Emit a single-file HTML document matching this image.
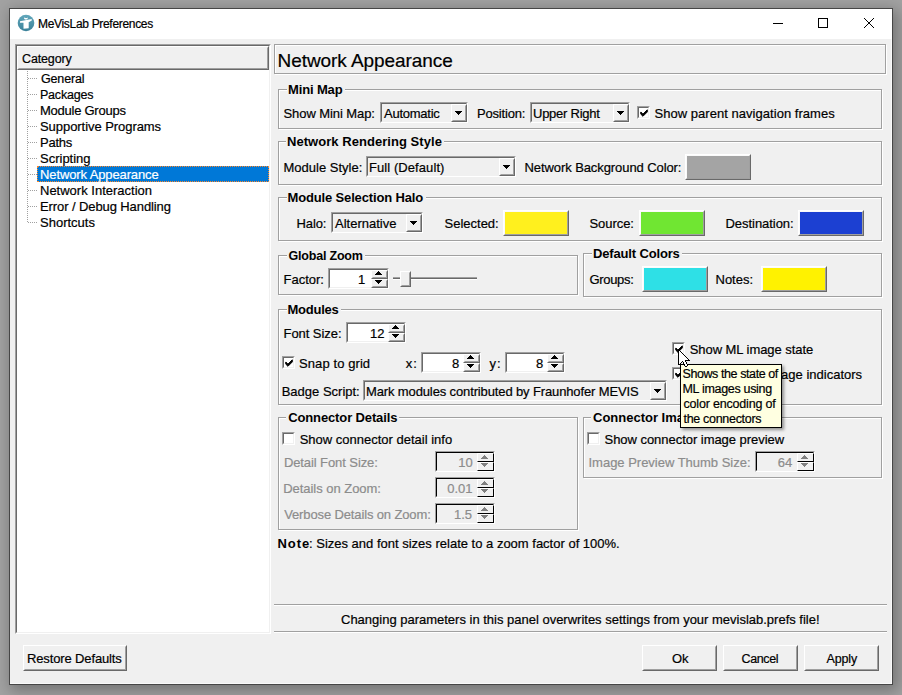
<!DOCTYPE html><html><head><meta charset="utf-8"><title>MeVisLab Preferences</title><style>
html,body{margin:0;padding:0;width:902px;height:695px;overflow:hidden;background:#a2a2a2}
.a{position:absolute;box-sizing:content-box}
.t{position:absolute;font-family:"Liberation Sans",sans-serif;font-size:13px;line-height:15px;color:#000;white-space:nowrap;-webkit-text-stroke:0.2px currentColor}
</style></head><body>
<div class="a" style="left:9px;top:8px;width:884px;height:677px;background:#464646;box-shadow:3px 4px 14px 2px rgba(0,0,0,0.28)"></div>
<div class="a" style="left:10px;top:9px;width:882px;height:675px;background:#f0f0f0;"></div>
<div class="a" style="left:891px;top:39px;width:1px;height:645px;background:#fafafa;"></div>
<div class="a" style="left:10px;top:683px;width:882px;height:1px;background:#fafafa;"></div>
<div class="a" style="left:10px;top:9px;width:882px;height:30px;background:#fff;"></div>
<svg class="a" style="left:17px;top:14px" width="18" height="18" viewBox="0 0 18 18"><defs><linearGradient id="ig" x1="0" y1="0" x2="0" y2="1"><stop offset="0" stop-color="#62a7bb"/><stop offset="1" stop-color="#3a8199"/></linearGradient></defs><circle cx="9" cy="9" r="8.3" fill="url(#ig)"/><path d="M3 7.3 L14.7 5.1 L14.8 6.4 L11.7 8.3 L11.7 14.3 L6.5 14.7 L6.5 8.7 L3 8.7 Z" fill="#fff"/><path d="M6.9 3.5 Q8.9 4.4 11 3.4 L10.5 4.9 Q8.9 6.2 7.3 4.9 Z" fill="#fff"/></svg>
<div class="t" style="left:38px;top:17px;line-height:14px;font-size:12px;letter-spacing:-0.316px;">MeVisLab Preferences</div>
<div class="a" style="left:773px;top:23px;width:10px;height:1px;background:#000;"></div>
<div class="a" style="left:818px;top:18px;width:8px;height:8px;border:1px solid #000"></div>
<svg class="a" style="left:864px;top:18px" width="10" height="10" shape-rendering="crispEdges"><path d="M0 0h1v1h-1zM1 1h1v1h-1zM2 2h1v1h-1zM3 3h1v1h-1zM4 4h2v2h-2zM6 6h1v1h-1zM7 7h1v1h-1zM8 8h1v1h-1zM9 9h1v1h-1zM9 0h1v1h-1zM8 1h1v1h-1zM7 2h1v1h-1zM6 3h1v1h-1zM3 6h1v1h-1zM2 7h1v1h-1zM1 8h1v1h-1zM0 9h1v1h-1z" fill="#000"/></svg>
<div class="a" style="left:15px;top:44px;width:254px;height:588px;border:1px solid;border-color:#a0a0a0 #fff #fff #a0a0a0;background:#fff"><div style="position:absolute;left:0;top:0;width:252px;height:586px;border:1px solid;border-color:#696969 #f0f0f0 #f0f0f0 #696969"></div></div>
<div class="a" style="left:17px;top:46px;width:250px;height:22px;border:1px solid;border-color:#fff #696969 #696969 #fff;background:#f0f0f0"><div style="position:absolute;left:0;top:0;width:248px;height:20px;border:1px solid;border-color:#f0f0f0 #a0a0a0 #a0a0a0 #f0f0f0"></div></div>
<div class="t" style="left:22px;top:52px;line-height:14px;font-size:12.5px;letter-spacing:-0.143px;">Category</div>
<div class="a" style="left:27px;top:71px;width:1px;height:152px;background:repeating-linear-gradient(to bottom,#a0a0a0 0 1px,transparent 1px 2px)"></div>
<div class="a" style="left:28px;top:78px;width:9px;height:1px;background:repeating-linear-gradient(to right,#a0a0a0 0 1px,transparent 1px 2px)"></div>
<div class="t" style="left:41px;top:72px;line-height:14px;font-size:12.5px;letter-spacing:-0.167px;">General</div>
<div class="a" style="left:28px;top:94px;width:9px;height:1px;background:repeating-linear-gradient(to right,#a0a0a0 0 1px,transparent 1px 2px)"></div>
<div class="t" style="left:40px;top:88px;line-height:14px;font-size:12.5px;letter-spacing:-0.214px;">Packages</div>
<div class="a" style="left:28px;top:110px;width:9px;height:1px;background:repeating-linear-gradient(to right,#a0a0a0 0 1px,transparent 1px 2px)"></div>
<div class="t" style="left:40px;top:103px;line-height:15px;letter-spacing:-0.25px;">Module Groups</div>
<div class="a" style="left:28px;top:126px;width:9px;height:1px;background:repeating-linear-gradient(to right,#a0a0a0 0 1px,transparent 1px 2px)"></div>
<div class="t" style="left:40px;top:119px;line-height:15px;letter-spacing:-0.056px;">Supportive Programs</div>
<div class="a" style="left:28px;top:142px;width:9px;height:1px;background:repeating-linear-gradient(to right,#a0a0a0 0 1px,transparent 1px 2px)"></div>
<div class="t" style="left:40px;top:135px;line-height:15px;letter-spacing:-0.25px;">Paths</div>
<div class="a" style="left:28px;top:158px;width:9px;height:1px;background:repeating-linear-gradient(to right,#a0a0a0 0 1px,transparent 1px 2px)"></div>
<div class="t" style="left:40px;top:151px;line-height:15px;">Scripting</div>
<div class="a" style="left:28px;top:174px;width:9px;height:1px;background:repeating-linear-gradient(to right,#a0a0a0 0 1px,transparent 1px 2px)"></div>
<div class="a" style="left:37px;top:166px;width:232px;height:16px;background:#0078d7;"></div>
<div class="a" style="left:37px;top:166px;width:230px;height:14px;border:1px dotted #ff8728"></div>
<div class="t" style="left:40px;top:167px;line-height:15px;color:#fff;letter-spacing:-0.118px;">Network Appearance</div>
<div class="a" style="left:28px;top:190px;width:9px;height:1px;background:repeating-linear-gradient(to right,#a0a0a0 0 1px,transparent 1px 2px)"></div>
<div class="t" style="left:40px;top:183px;line-height:15px;">Network Interaction</div>
<div class="a" style="left:28px;top:206px;width:9px;height:1px;background:repeating-linear-gradient(to right,#a0a0a0 0 1px,transparent 1px 2px)"></div>
<div class="t" style="left:40px;top:199px;line-height:15px;letter-spacing:-0.095px;">Error / Debug Handling</div>
<div class="a" style="left:28px;top:222px;width:9px;height:1px;background:repeating-linear-gradient(to right,#a0a0a0 0 1px,transparent 1px 2px)"></div>
<div class="t" style="left:40px;top:215px;line-height:15px;">Shortcuts</div>
<div class="a" style="left:275px;top:45px;width:610px;height:28px;border:1px solid #fff"></div>
<div class="a" style="left:274px;top:44px;width:610px;height:28px;border:1px solid #a0a0a0"></div>
<div class="t" style="left:277.5px;top:50px;line-height:21px;font-size:19px;letter-spacing:-0.059px;">Network Appearance</div>
<div class="a" style="left:279px;top:90px;width:602px;height:38px;border:1px solid #fff"></div>
<div class="a" style="left:278px;top:89px;width:602px;height:38px;border:1px solid #a0a0a0"></div>
<div class="a" style="left:287px;top:89px;width:58px;height:2px;background:#f0f0f0;"></div>
<div class="t" style="left:288px;top:82px;line-height:15px;font-weight:bold;-webkit-text-stroke:0;letter-spacing:-0.143px;">Mini Map</div>
<div class="t" style="left:283.5px;top:106px;line-height:15px;letter-spacing:-0.077px;">Show Mini Map:</div>
<div class="a" style="left:380px;top:102px;width:86px;height:19px;border:1px solid;border-color:#a0a0a0 #fff #fff #a0a0a0;background:#f0f0f0"><div style="position:absolute;left:0;top:0;width:84px;height:17px;border:1px solid;border-color:#696969 #f0f0f0 #f0f0f0 #696969"></div></div>
<div class="a" style="left:451px;top:104px;width:14px;height:16px;border:1px solid;border-color:#fff #696969 #696969 #fff;background:#f0f0f0"><div style="position:absolute;left:0;top:0;width:12px;height:14px;border:1px solid;border-color:#f0f0f0 #a0a0a0 #a0a0a0 #f0f0f0"></div></div>
<svg class="a" style="left:455px;top:111px" width="7" height="4" shape-rendering="crispEdges"><path d="M0 0h7v1h-7zM1 1h5v1h-5zM2 2h3v1h-3zM3 3h1v1h-1z" fill="#000"/></svg>
<div class="t" style="left:384px;top:106px;line-height:15px;letter-spacing:-0.25px;">Automatic</div>
<div class="t" style="left:477px;top:106px;line-height:15px;letter-spacing:-0.188px;">Position:</div>
<div class="a" style="left:530px;top:102px;width:98px;height:19px;border:1px solid;border-color:#a0a0a0 #fff #fff #a0a0a0;background:#f0f0f0"><div style="position:absolute;left:0;top:0;width:96px;height:17px;border:1px solid;border-color:#696969 #f0f0f0 #f0f0f0 #696969"></div></div>
<div class="a" style="left:613px;top:104px;width:14px;height:16px;border:1px solid;border-color:#fff #696969 #696969 #fff;background:#f0f0f0"><div style="position:absolute;left:0;top:0;width:12px;height:14px;border:1px solid;border-color:#f0f0f0 #a0a0a0 #a0a0a0 #f0f0f0"></div></div>
<svg class="a" style="left:617px;top:111px" width="7" height="4" shape-rendering="crispEdges"><path d="M0 0h7v1h-7zM1 1h5v1h-5zM2 2h3v1h-3zM3 3h1v1h-1z" fill="#000"/></svg>
<div class="t" style="left:533px;top:106px;line-height:15px;letter-spacing:-0.25px;">Upper Right</div>
<div class="a" style="left:637px;top:106px;width:11px;height:11px;border:1px solid;border-color:#a0a0a0 #fff #fff #a0a0a0;background:#fff"><div style="position:absolute;left:0;top:0;width:9px;height:9px;border:1px solid;border-color:#696969 #f0f0f0 #f0f0f0 #696969"></div></div>
<svg class="a" style="left:637px;top:106px" width="13" height="13"><polygon points="3.79,5.96 3.79,8.13 5.96,10.29 10.29,5.96 10.29,3.79 5.96,8.13" fill="#000" stroke="#000" stroke-width="1"/></svg>
<div class="t" style="left:654.5px;top:106px;line-height:15px;letter-spacing:0.036px;">Show parent navigation frames</div>
<div class="a" style="left:279px;top:142px;width:602px;height:42px;border:1px solid #fff"></div>
<div class="a" style="left:278px;top:141px;width:602px;height:42px;border:1px solid #a0a0a0"></div>
<div class="a" style="left:286px;top:141px;width:158px;height:2px;background:#f0f0f0;"></div>
<div class="t" style="left:287px;top:134px;line-height:15px;font-weight:bold;-webkit-text-stroke:0;letter-spacing:0.045px;">Network Rendering Style</div>
<div class="t" style="left:283.5px;top:160px;line-height:15px;">Module Style:</div>
<div class="a" style="left:366px;top:156px;width:148px;height:19px;border:1px solid;border-color:#a0a0a0 #fff #fff #a0a0a0;background:#f0f0f0"><div style="position:absolute;left:0;top:0;width:146px;height:17px;border:1px solid;border-color:#696969 #f0f0f0 #f0f0f0 #696969"></div></div>
<div class="a" style="left:499px;top:158px;width:14px;height:16px;border:1px solid;border-color:#fff #696969 #696969 #fff;background:#f0f0f0"><div style="position:absolute;left:0;top:0;width:12px;height:14px;border:1px solid;border-color:#f0f0f0 #a0a0a0 #a0a0a0 #f0f0f0"></div></div>
<svg class="a" style="left:503px;top:165px" width="7" height="4" shape-rendering="crispEdges"><path d="M0 0h7v1h-7zM1 1h5v1h-5zM2 2h3v1h-3zM3 3h1v1h-1z" fill="#000"/></svg>
<div class="t" style="left:369px;top:160px;line-height:15px;letter-spacing:0.077px;">Full (Default)</div>
<div class="t" style="left:524.5px;top:160px;line-height:15px;letter-spacing:-0.083px;">Network Background Color:</div>
<div class="a" style="left:685px;top:154px;width:64px;height:24px;border:1px solid;border-color:#fff #696969 #696969 #fff;background:#a4a4a4"><div style="position:absolute;left:0;top:0;width:62px;height:22px;border:1px solid;border-color:#fafafa #a0a0a0 #a0a0a0 #fafafa"></div></div>
<div class="a" style="left:279px;top:198px;width:602px;height:42px;border:1px solid #fff"></div>
<div class="a" style="left:278px;top:197px;width:602px;height:42px;border:1px solid #a0a0a0"></div>
<div class="a" style="left:286.5px;top:197px;width:139px;height:2px;background:#f0f0f0;"></div>
<div class="t" style="left:287.5px;top:190px;line-height:15px;font-weight:bold;-webkit-text-stroke:0;letter-spacing:-0.15px;">Module Selection Halo</div>
<div class="t" style="left:296.5px;top:216px;line-height:15px;letter-spacing:-0.1px;">Halo:</div>
<div class="a" style="left:331px;top:212px;width:90px;height:19px;border:1px solid;border-color:#a0a0a0 #fff #fff #a0a0a0;background:#f0f0f0"><div style="position:absolute;left:0;top:0;width:88px;height:17px;border:1px solid;border-color:#696969 #f0f0f0 #f0f0f0 #696969"></div></div>
<div class="a" style="left:406px;top:214px;width:14px;height:16px;border:1px solid;border-color:#fff #696969 #696969 #fff;background:#f0f0f0"><div style="position:absolute;left:0;top:0;width:12px;height:14px;border:1px solid;border-color:#f0f0f0 #a0a0a0 #a0a0a0 #f0f0f0"></div></div>
<svg class="a" style="left:410px;top:221px" width="7" height="4" shape-rendering="crispEdges"><path d="M0 0h7v1h-7zM1 1h5v1h-5zM2 2h3v1h-3zM3 3h1v1h-1z" fill="#000"/></svg>
<div class="t" style="left:335px;top:216px;line-height:15px;">Alternative</div>
<div class="t" style="left:444.5px;top:216px;line-height:15px;">Selected:</div>
<div class="a" style="left:503px;top:210px;width:64px;height:24px;border:1px solid;border-color:#fff #696969 #696969 #fff;background:#fff01e"><div style="position:absolute;left:0;top:0;width:62px;height:22px;border:1px solid;border-color:#fafafa #a0a0a0 #a0a0a0 #fafafa"></div></div>
<div class="t" style="left:589.5px;top:216px;line-height:15px;letter-spacing:-0.067px;">Source:</div>
<div class="a" style="left:639px;top:210px;width:64px;height:24px;border:1px solid;border-color:#fff #696969 #696969 #fff;background:#70e632"><div style="position:absolute;left:0;top:0;width:62px;height:22px;border:1px solid;border-color:#fafafa #a0a0a0 #a0a0a0 #fafafa"></div></div>
<div class="t" style="left:725.5px;top:216px;line-height:15px;letter-spacing:-0.045px;">Destination:</div>
<div class="a" style="left:798px;top:210px;width:64px;height:24px;border:1px solid;border-color:#fff #696969 #696969 #fff;background:#1c40d2"><div style="position:absolute;left:0;top:0;width:62px;height:22px;border:1px solid;border-color:#fafafa #a0a0a0 #a0a0a0 #fafafa"></div></div>
<div class="a" style="left:279px;top:256px;width:298px;height:38px;border:1px solid #fff"></div>
<div class="a" style="left:278px;top:255px;width:298px;height:38px;border:1px solid #a0a0a0"></div>
<div class="a" style="left:286.5px;top:255px;width:78px;height:2px;background:#f0f0f0;"></div>
<div class="t" style="left:288.5px;top:249px;line-height:14px;font-size:12.5px;font-weight:bold;-webkit-text-stroke:0;letter-spacing:-0.2px;">Global Zoom</div>
<div class="t" style="left:283.5px;top:272px;line-height:15px;">Factor:</div>
<div class="a" style="left:328px;top:268px;width:59px;height:19px;border:1px solid;border-color:#a0a0a0 #fff #fff #a0a0a0;background:#fff"><div style="position:absolute;left:0;top:0;width:57px;height:17px;border:1px solid;border-color:#696969 #f0f0f0 #f0f0f0 #696969"></div></div>
<div class="a" style="left:371px;top:270px;width:15px;height:7px;border:1px solid;border-color:#fff #696969 #696969 #fff;background:#f0f0f0"><div style="position:absolute;left:0;top:0;width:13px;height:5px;border:1px solid;border-color:#f0f0f0 #a0a0a0 #a0a0a0 #f0f0f0"></div></div>
<div class="a" style="left:371px;top:279px;width:15px;height:7px;border:1px solid;border-color:#fff #696969 #696969 #fff;background:#f0f0f0"><div style="position:absolute;left:0;top:0;width:13px;height:5px;border:1px solid;border-color:#f0f0f0 #a0a0a0 #a0a0a0 #f0f0f0"></div></div>
<svg class="a" style="left:375px;top:271px" width="7" height="4" shape-rendering="crispEdges"><path d="M3 0h1v1h-1zM2 1h3v1h-3zM1 2h5v1h-5zM0 3h7v1h-7z" fill="#000"/></svg>
<svg class="a" style="left:375px;top:280px" width="7" height="4" shape-rendering="crispEdges"><path d="M0 0h7v1h-7zM1 1h5v1h-5zM2 2h3v1h-3zM3 3h1v1h-1z" fill="#000"/></svg>
<div class="t" style="left:358px;top:272px;line-height:15px;">1</div>
<div class="a" style="left:393px;top:277px;width:84px;height:1px;background:#a0a0a0;"></div>
<div class="a" style="left:393px;top:278px;width:84px;height:1px;background:#696969;"></div>
<div class="a" style="left:393px;top:279px;width:84px;height:1px;background:#fff;"></div>
<div class="a" style="left:400px;top:271px;width:9px;height:14px;border:1px solid;border-color:#fff #696969 #696969 #fff;background:#f0f0f0"><div style="position:absolute;left:0;top:0;width:7px;height:12px;border:1px solid;border-color:#f0f0f0 #a0a0a0 #a0a0a0 #f0f0f0"></div></div>
<div class="a" style="left:584px;top:254px;width:297px;height:42px;border:1px solid #fff"></div>
<div class="a" style="left:583px;top:253px;width:297px;height:42px;border:1px solid #a0a0a0"></div>
<div class="a" style="left:592px;top:253px;width:90px;height:2px;background:#f0f0f0;"></div>
<div class="t" style="left:593px;top:246px;line-height:15px;font-weight:bold;-webkit-text-stroke:0;letter-spacing:-0.154px;">Default Colors</div>
<div class="t" style="left:589.5px;top:272px;line-height:15px;letter-spacing:-0.333px;">Groups:</div>
<div class="a" style="left:642px;top:266px;width:64px;height:24px;border:1px solid;border-color:#fff #696969 #696969 #fff;background:#2ee0e6"><div style="position:absolute;left:0;top:0;width:62px;height:22px;border:1px solid;border-color:#fafafa #a0a0a0 #a0a0a0 #fafafa"></div></div>
<div class="t" style="left:715.5px;top:272px;line-height:15px;">Notes:</div>
<div class="a" style="left:761px;top:266px;width:64px;height:24px;border:1px solid;border-color:#fff #696969 #696969 #fff;background:#fff200"><div style="position:absolute;left:0;top:0;width:62px;height:22px;border:1px solid;border-color:#fafafa #a0a0a0 #a0a0a0 #fafafa"></div></div>
<div class="a" style="left:279px;top:310px;width:602px;height:94px;border:1px solid #fff"></div>
<div class="a" style="left:278px;top:309px;width:602px;height:94px;border:1px solid #a0a0a0"></div>
<div class="a" style="left:286.5px;top:309px;width:54.6px;height:2px;background:#f0f0f0;"></div>
<div class="t" style="left:287.5px;top:302px;line-height:15px;font-weight:bold;-webkit-text-stroke:0;letter-spacing:-0.233px;">Modules</div>
<div class="t" style="left:283.5px;top:326px;line-height:15px;letter-spacing:-0.056px;">Font Size:</div>
<div class="a" style="left:346px;top:322px;width:58px;height:19px;border:1px solid;border-color:#a0a0a0 #fff #fff #a0a0a0;background:#fff"><div style="position:absolute;left:0;top:0;width:56px;height:17px;border:1px solid;border-color:#696969 #f0f0f0 #f0f0f0 #696969"></div></div>
<div class="a" style="left:388px;top:324px;width:15px;height:7px;border:1px solid;border-color:#fff #696969 #696969 #fff;background:#f0f0f0"><div style="position:absolute;left:0;top:0;width:13px;height:5px;border:1px solid;border-color:#f0f0f0 #a0a0a0 #a0a0a0 #f0f0f0"></div></div>
<div class="a" style="left:388px;top:333px;width:15px;height:7px;border:1px solid;border-color:#fff #696969 #696969 #fff;background:#f0f0f0"><div style="position:absolute;left:0;top:0;width:13px;height:5px;border:1px solid;border-color:#f0f0f0 #a0a0a0 #a0a0a0 #f0f0f0"></div></div>
<svg class="a" style="left:392px;top:325px" width="7" height="4" shape-rendering="crispEdges"><path d="M3 0h1v1h-1zM2 1h3v1h-3zM1 2h5v1h-5zM0 3h7v1h-7z" fill="#000"/></svg>
<svg class="a" style="left:392px;top:334px" width="7" height="4" shape-rendering="crispEdges"><path d="M0 0h7v1h-7zM1 1h5v1h-5zM2 2h3v1h-3zM3 3h1v1h-1z" fill="#000"/></svg>
<div class="t" style="left:370px;top:326px;line-height:15px;">12</div>
<div class="a" style="left:282px;top:356px;width:11px;height:11px;border:1px solid;border-color:#a0a0a0 #fff #fff #a0a0a0;background:#fff"><div style="position:absolute;left:0;top:0;width:9px;height:9px;border:1px solid;border-color:#696969 #f0f0f0 #f0f0f0 #696969"></div></div>
<svg class="a" style="left:282px;top:356px" width="13" height="13"><polygon points="3.79,5.96 3.79,8.13 5.96,10.29 10.29,5.96 10.29,3.79 5.96,8.13" fill="#000" stroke="#000" stroke-width="1"/></svg>
<div class="t" style="left:299px;top:356px;line-height:15px;letter-spacing:0.091px;">Snap to grid</div>
<div class="t" style="left:405.7px;top:356px;line-height:15px;letter-spacing:1.0px;">x:</div>
<div class="a" style="left:421px;top:352px;width:58px;height:19px;border:1px solid;border-color:#a0a0a0 #fff #fff #a0a0a0;background:#fff"><div style="position:absolute;left:0;top:0;width:56px;height:17px;border:1px solid;border-color:#696969 #f0f0f0 #f0f0f0 #696969"></div></div>
<div class="a" style="left:463px;top:354px;width:15px;height:7px;border:1px solid;border-color:#fff #696969 #696969 #fff;background:#f0f0f0"><div style="position:absolute;left:0;top:0;width:13px;height:5px;border:1px solid;border-color:#f0f0f0 #a0a0a0 #a0a0a0 #f0f0f0"></div></div>
<div class="a" style="left:463px;top:363px;width:15px;height:7px;border:1px solid;border-color:#fff #696969 #696969 #fff;background:#f0f0f0"><div style="position:absolute;left:0;top:0;width:13px;height:5px;border:1px solid;border-color:#f0f0f0 #a0a0a0 #a0a0a0 #f0f0f0"></div></div>
<svg class="a" style="left:467px;top:355px" width="7" height="4" shape-rendering="crispEdges"><path d="M3 0h1v1h-1zM2 1h3v1h-3zM1 2h5v1h-5zM0 3h7v1h-7z" fill="#000"/></svg>
<svg class="a" style="left:467px;top:364px" width="7" height="4" shape-rendering="crispEdges"><path d="M0 0h7v1h-7zM1 1h5v1h-5zM2 2h3v1h-3zM3 3h1v1h-1z" fill="#000"/></svg>
<div class="t" style="left:452px;top:356px;line-height:15px;">8</div>
<div class="t" style="left:489.5px;top:356px;line-height:15px;letter-spacing:1.0px;">y:</div>
<div class="a" style="left:505px;top:352px;width:58px;height:19px;border:1px solid;border-color:#a0a0a0 #fff #fff #a0a0a0;background:#fff"><div style="position:absolute;left:0;top:0;width:56px;height:17px;border:1px solid;border-color:#696969 #f0f0f0 #f0f0f0 #696969"></div></div>
<div class="a" style="left:547px;top:354px;width:15px;height:7px;border:1px solid;border-color:#fff #696969 #696969 #fff;background:#f0f0f0"><div style="position:absolute;left:0;top:0;width:13px;height:5px;border:1px solid;border-color:#f0f0f0 #a0a0a0 #a0a0a0 #f0f0f0"></div></div>
<div class="a" style="left:547px;top:363px;width:15px;height:7px;border:1px solid;border-color:#fff #696969 #696969 #fff;background:#f0f0f0"><div style="position:absolute;left:0;top:0;width:13px;height:5px;border:1px solid;border-color:#f0f0f0 #a0a0a0 #a0a0a0 #f0f0f0"></div></div>
<svg class="a" style="left:551px;top:355px" width="7" height="4" shape-rendering="crispEdges"><path d="M3 0h1v1h-1zM2 1h3v1h-3zM1 2h5v1h-5zM0 3h7v1h-7z" fill="#000"/></svg>
<svg class="a" style="left:551px;top:364px" width="7" height="4" shape-rendering="crispEdges"><path d="M0 0h7v1h-7zM1 1h5v1h-5zM2 2h3v1h-3zM3 3h1v1h-1z" fill="#000"/></svg>
<div class="t" style="left:536px;top:356px;line-height:15px;">8</div>
<div class="t" style="left:281.7px;top:384px;line-height:15px;">Badge Script:</div>
<div class="a" style="left:363px;top:380px;width:302px;height:19px;border:1px solid;border-color:#a0a0a0 #fff #fff #a0a0a0;background:#f0f0f0"><div style="position:absolute;left:0;top:0;width:300px;height:17px;border:1px solid;border-color:#696969 #f0f0f0 #f0f0f0 #696969"></div></div>
<div class="a" style="left:650px;top:382px;width:14px;height:16px;border:1px solid;border-color:#fff #696969 #696969 #fff;background:#f0f0f0"><div style="position:absolute;left:0;top:0;width:12px;height:14px;border:1px solid;border-color:#f0f0f0 #a0a0a0 #a0a0a0 #f0f0f0"></div></div>
<svg class="a" style="left:654px;top:389px" width="7" height="4" shape-rendering="crispEdges"><path d="M0 0h7v1h-7zM1 1h5v1h-5zM2 2h3v1h-3zM3 3h1v1h-1z" fill="#000"/></svg>
<div class="t" style="left:366px;top:384px;line-height:15px;letter-spacing:-0.128px;">Mark modules contributed by Fraunhofer MEVIS</div>
<div class="a" style="left:672px;top:342px;width:11px;height:11px;border:1px solid;border-color:#a0a0a0 #fff #fff #a0a0a0;background:#fff"><div style="position:absolute;left:0;top:0;width:9px;height:9px;border:1px solid;border-color:#696969 #f0f0f0 #f0f0f0 #696969"></div></div>
<svg class="a" style="left:672px;top:342px" width="13" height="13"><polygon points="3.79,5.96 3.79,8.13 5.96,10.29 10.29,5.96 10.29,3.79 5.96,8.13" fill="#000" stroke="#000" stroke-width="1"/></svg>
<div class="t" style="left:689.7px;top:342px;line-height:15px;letter-spacing:-0.056px;">Show ML image state</div>
<div class="a" style="left:672px;top:367px;width:11px;height:11px;border:1px solid;border-color:#a0a0a0 #fff #fff #a0a0a0;background:#fff"><div style="position:absolute;left:0;top:0;width:9px;height:9px;border:1px solid;border-color:#696969 #f0f0f0 #f0f0f0 #696969"></div></div>
<svg class="a" style="left:672px;top:367px" width="13" height="13"><polygon points="3.79,5.96 3.79,8.13 5.96,10.29 10.29,5.96 10.29,3.79 5.96,8.13" fill="#000" stroke="#000" stroke-width="1"/></svg>
<div class="t" style="left:691.5px;top:367px;line-height:15px;">Show badge image indicators</div>
<div class="a" style="left:279px;top:418px;width:298px;height:111px;border:1px solid #fff"></div>
<div class="a" style="left:278px;top:417px;width:298px;height:111px;border:1px solid #a0a0a0"></div>
<div class="a" style="left:286.2px;top:417px;width:113px;height:2px;background:#f0f0f0;"></div>
<div class="t" style="left:288.2px;top:410px;line-height:15px;font-weight:bold;-webkit-text-stroke:0;letter-spacing:-0.125px;">Connector Details</div>
<div class="a" style="left:282px;top:432px;width:11px;height:11px;border:1px solid;border-color:#a0a0a0 #fff #fff #a0a0a0;background:#fff"><div style="position:absolute;left:0;top:0;width:9px;height:9px;border:1px solid;border-color:#696969 #f0f0f0 #f0f0f0 #696969"></div></div>
<div class="t" style="left:299.7px;top:432px;line-height:15px;">Show connector detail info</div>
<div class="t" style="left:283.9px;top:455px;line-height:15px;color:#8c8c8c;letter-spacing:-0.088px;">Detail Font Size:</div>
<div class="a" style="left:435px;top:451px;width:58px;height:19px;border:1px solid;border-color:#a0a0a0 #fff #fff #a0a0a0;background:#f0f0f0"><div style="position:absolute;left:0;top:0;width:56px;height:17px;border:1px solid;border-color:#000 #f0f0f0 #f0f0f0 #000"></div></div>
<div class="a" style="left:477px;top:453px;width:15px;height:7px;border:1px solid;border-color:#fff #000 #000 #fff;background:#f0f0f0"><div style="position:absolute;left:0;top:0;width:13px;height:5px;border:1px solid;border-color:#f0f0f0 #f0f0f0 #f0f0f0 #f0f0f0"></div></div>
<div class="a" style="left:477px;top:462px;width:15px;height:7px;border:1px solid;border-color:#fff #000 #000 #fff;background:#f0f0f0"><div style="position:absolute;left:0;top:0;width:13px;height:5px;border:1px solid;border-color:#f0f0f0 #f0f0f0 #f0f0f0 #f0f0f0"></div></div>
<svg class="a" style="left:481px;top:455px" width="7" height="4" shape-rendering="crispEdges"><path d="M3 0h1v1h-1zM2 1h3v1h-3zM1 2h5v1h-5zM0 3h7v1h-7z" fill="#808080"/></svg>
<svg class="a" style="left:481px;top:463px" width="7" height="4" shape-rendering="crispEdges"><path d="M0 0h7v1h-7zM1 1h5v1h-5zM2 2h3v1h-3zM3 3h1v1h-1z" fill="#808080"/></svg>
<div class="t" style="left:458.3px;top:455px;line-height:15px;color:#8c8c8c;">10</div>
<div class="t" style="left:283.2px;top:481px;line-height:15px;color:#8c8c8c;letter-spacing:-0.033px;">Details on Zoom:</div>
<div class="a" style="left:435px;top:477px;width:58px;height:19px;border:1px solid;border-color:#a0a0a0 #fff #fff #a0a0a0;background:#f0f0f0"><div style="position:absolute;left:0;top:0;width:56px;height:17px;border:1px solid;border-color:#000 #f0f0f0 #f0f0f0 #000"></div></div>
<div class="a" style="left:477px;top:479px;width:15px;height:7px;border:1px solid;border-color:#fff #000 #000 #fff;background:#f0f0f0"><div style="position:absolute;left:0;top:0;width:13px;height:5px;border:1px solid;border-color:#f0f0f0 #f0f0f0 #f0f0f0 #f0f0f0"></div></div>
<div class="a" style="left:477px;top:488px;width:15px;height:7px;border:1px solid;border-color:#fff #000 #000 #fff;background:#f0f0f0"><div style="position:absolute;left:0;top:0;width:13px;height:5px;border:1px solid;border-color:#f0f0f0 #f0f0f0 #f0f0f0 #f0f0f0"></div></div>
<svg class="a" style="left:481px;top:481px" width="7" height="4" shape-rendering="crispEdges"><path d="M3 0h1v1h-1zM2 1h3v1h-3zM1 2h5v1h-5zM0 3h7v1h-7z" fill="#808080"/></svg>
<svg class="a" style="left:481px;top:489px" width="7" height="4" shape-rendering="crispEdges"><path d="M0 0h7v1h-7zM1 1h5v1h-5zM2 2h3v1h-3zM3 3h1v1h-1z" fill="#808080"/></svg>
<div class="t" style="left:447.2px;top:481px;line-height:15px;color:#8c8c8c;">0.01</div>
<div class="t" style="left:284.2px;top:507px;line-height:15px;color:#8c8c8c;letter-spacing:-0.13px;">Verbose Details on Zoom:</div>
<div class="a" style="left:435px;top:503px;width:58px;height:19px;border:1px solid;border-color:#a0a0a0 #fff #fff #a0a0a0;background:#f0f0f0"><div style="position:absolute;left:0;top:0;width:56px;height:17px;border:1px solid;border-color:#000 #f0f0f0 #f0f0f0 #000"></div></div>
<div class="a" style="left:477px;top:505px;width:15px;height:7px;border:1px solid;border-color:#fff #000 #000 #fff;background:#f0f0f0"><div style="position:absolute;left:0;top:0;width:13px;height:5px;border:1px solid;border-color:#f0f0f0 #f0f0f0 #f0f0f0 #f0f0f0"></div></div>
<div class="a" style="left:477px;top:514px;width:15px;height:7px;border:1px solid;border-color:#fff #000 #000 #fff;background:#f0f0f0"><div style="position:absolute;left:0;top:0;width:13px;height:5px;border:1px solid;border-color:#f0f0f0 #f0f0f0 #f0f0f0 #f0f0f0"></div></div>
<svg class="a" style="left:481px;top:507px" width="7" height="4" shape-rendering="crispEdges"><path d="M3 0h1v1h-1zM2 1h3v1h-3zM1 2h5v1h-5zM0 3h7v1h-7z" fill="#808080"/></svg>
<svg class="a" style="left:481px;top:515px" width="7" height="4" shape-rendering="crispEdges"><path d="M0 0h7v1h-7zM1 1h5v1h-5zM2 2h3v1h-3zM3 3h1v1h-1z" fill="#808080"/></svg>
<div class="t" style="left:454px;top:507px;line-height:15px;color:#8c8c8c;">1.5</div>
<div class="a" style="left:584px;top:418px;width:297px;height:59px;border:1px solid #fff"></div>
<div class="a" style="left:583px;top:417px;width:297px;height:59px;border:1px solid #a0a0a0"></div>
<div class="a" style="left:591px;top:417px;width:154px;height:2px;background:#f0f0f0;"></div>
<div class="t" style="left:593px;top:410px;line-height:15px;font-weight:bold;-webkit-text-stroke:0;">Connector Image Preview</div>
<div class="a" style="left:587px;top:432px;width:11px;height:11px;border:1px solid;border-color:#a0a0a0 #fff #fff #a0a0a0;background:#fff"><div style="position:absolute;left:0;top:0;width:9px;height:9px;border:1px solid;border-color:#696969 #f0f0f0 #f0f0f0 #696969"></div></div>
<div class="t" style="left:604.5px;top:432px;line-height:15px;letter-spacing:-0.037px;">Show connector image preview</div>
<div class="t" style="left:588.5px;top:455px;line-height:15px;color:#8c8c8c;letter-spacing:-0.013px;">Image Preview Thumb Size:</div>
<div class="a" style="left:755px;top:451px;width:58px;height:19px;border:1px solid;border-color:#a0a0a0 #fff #fff #a0a0a0;background:#f0f0f0"><div style="position:absolute;left:0;top:0;width:56px;height:17px;border:1px solid;border-color:#000 #f0f0f0 #f0f0f0 #000"></div></div>
<div class="a" style="left:797px;top:453px;width:15px;height:7px;border:1px solid;border-color:#fff #000 #000 #fff;background:#f0f0f0"><div style="position:absolute;left:0;top:0;width:13px;height:5px;border:1px solid;border-color:#f0f0f0 #f0f0f0 #f0f0f0 #f0f0f0"></div></div>
<div class="a" style="left:797px;top:462px;width:15px;height:7px;border:1px solid;border-color:#fff #000 #000 #fff;background:#f0f0f0"><div style="position:absolute;left:0;top:0;width:13px;height:5px;border:1px solid;border-color:#f0f0f0 #f0f0f0 #f0f0f0 #f0f0f0"></div></div>
<svg class="a" style="left:801px;top:455px" width="7" height="4" shape-rendering="crispEdges"><path d="M3 0h1v1h-1zM2 1h3v1h-3zM1 2h5v1h-5zM0 3h7v1h-7z" fill="#808080"/></svg>
<svg class="a" style="left:801px;top:463px" width="7" height="4" shape-rendering="crispEdges"><path d="M0 0h7v1h-7zM1 1h5v1h-5zM2 2h3v1h-3zM3 3h1v1h-1z" fill="#808080"/></svg>
<div class="t" style="left:777.8px;top:455px;line-height:15px;color:#8c8c8c;">64</div>
<div class="t" style="left:277.4px;top:536px;line-height:15px;font-weight:bold;-webkit-text-stroke:0;letter-spacing:1.0px;">Note</div>
<div class="t" style="left:309px;top:536px;line-height:15px;">: Sizes and font sizes relate to a zoom factor of 100%.</div>
<div class="a" style="left:274px;top:604px;width:613px;height:1px;background:#a0a0a0;"></div>
<div class="a" style="left:274px;top:605px;width:613px;height:1px;background:#fff;"></div>
<div class="a" style="left:274px;top:631px;width:613px;height:1px;background:#a0a0a0;"></div>
<div class="a" style="left:274px;top:632px;width:613px;height:1px;background:#fff;"></div>
<div class="t" style="left:341px;top:612px;line-height:15px;letter-spacing:-0.006px;">Changing parameters in this panel overwrites settings from your mevislab.prefs file!</div>
<div class="a" style="left:23px;top:645px;width:102px;height:24px;border:1px solid;border-color:#fff #696969 #696969 #fff;background:#f0f0f0"><div style="position:absolute;left:0;top:0;width:100px;height:22px;border:1px solid;border-color:#f0f0f0 #a0a0a0 #a0a0a0 #f0f0f0"></div></div>
<div class="t" style="left:27px;top:651px;line-height:15px;letter-spacing:-0.133px;">Restore Defaults</div>
<div class="a" style="left:642px;top:645px;width:73px;height:24px;border:1px solid;border-color:#fff #696969 #696969 #fff;background:#f0f0f0"><div style="position:absolute;left:0;top:0;width:71px;height:22px;border:1px solid;border-color:#f0f0f0 #a0a0a0 #a0a0a0 #f0f0f0"></div></div>
<div class="t" style="left:672px;top:651px;line-height:15px;">Ok</div>
<div class="a" style="left:723px;top:645px;width:73px;height:24px;border:1px solid;border-color:#fff #696969 #696969 #fff;background:#f0f0f0"><div style="position:absolute;left:0;top:0;width:71px;height:22px;border:1px solid;border-color:#f0f0f0 #a0a0a0 #a0a0a0 #f0f0f0"></div></div>
<div class="t" style="left:741.5px;top:652px;line-height:14px;font-size:12.5px;letter-spacing:-0.38px;">Cancel</div>
<div class="a" style="left:804px;top:645px;width:73px;height:24px;border:1px solid;border-color:#fff #696969 #696969 #fff;background:#f0f0f0"><div style="position:absolute;left:0;top:0;width:71px;height:22px;border:1px solid;border-color:#f0f0f0 #a0a0a0 #a0a0a0 #f0f0f0"></div></div>
<div class="t" style="left:826.4px;top:652px;line-height:14px;font-size:12.5px;letter-spacing:-0.1px;">Apply</div>
<div class="a" style="left:680px;top:364px;width:100px;height:62px;border:1px solid #000;background:#ffffe1;box-shadow:2px 2px 3px rgba(0,0,0,0.4)"></div>
<div class="t" style="left:682.5px;top:367px;line-height:14px;font-size:12.5px;letter-spacing:-0.412px;">Shows the state of</div>
<div class="t" style="left:682.5px;top:382px;line-height:14px;font-size:12.5px;letter-spacing:-0.314px;">ML images using</div>
<div class="t" style="left:683.5px;top:397px;line-height:14px;font-size:12.5px;letter-spacing:-0.188px;">color encoding of</div>
<div class="t" style="left:683.5px;top:412px;line-height:14px;font-size:12.5px;letter-spacing:-0.308px;">the connectors</div>
<svg class="a" style="left:678px;top:349px" width="12" height="18" shape-rendering="crispEdges"><path d="M1 2h1v1h-1zM1 3h2v1h-2zM1 4h3v1h-3zM1 5h4v1h-4zM1 6h5v1h-5zM1 7h6v1h-6zM1 8h7v1h-7zM1 9h8v1h-8zM1 10h9v1h-9zM1 11h6v1h-6zM1 12h3v1h-3zM5 12h2v1h-2zM1 13h2v1h-2zM6 13h2v1h-2zM1 14h1v1h-1zM6 14h2v1h-2zM7 15h2v1h-2zM7 16h2v1h-2z" fill="#fff"/><path d="M0 0h1v1h-1zM0 1h2v1h-2zM0 2h1v1h-1zM2 2h1v1h-1zM0 3h1v1h-1zM3 3h1v1h-1zM0 4h1v1h-1zM4 4h1v1h-1zM0 5h1v1h-1zM5 5h1v1h-1zM0 6h1v1h-1zM6 6h1v1h-1zM0 7h1v1h-1zM7 7h1v1h-1zM0 8h1v1h-1zM8 8h1v1h-1zM0 9h1v1h-1zM9 9h1v1h-1zM0 10h1v1h-1zM10 10h1v1h-1zM0 11h1v1h-1zM7 11h5v1h-5zM0 12h1v1h-1zM4 12h1v1h-1zM7 12h1v1h-1zM0 13h1v1h-1zM3 13h1v1h-1zM5 13h1v1h-1zM8 13h1v1h-1zM0 14h1v1h-1zM2 14h1v1h-1zM5 14h1v1h-1zM8 14h1v1h-1zM0 15h2v1h-2zM6 15h1v1h-1zM9 15h1v1h-1zM6 16h1v1h-1zM9 16h1v1h-1zM7 17h2v1h-2z" fill="#000"/></svg>
</body></html>
